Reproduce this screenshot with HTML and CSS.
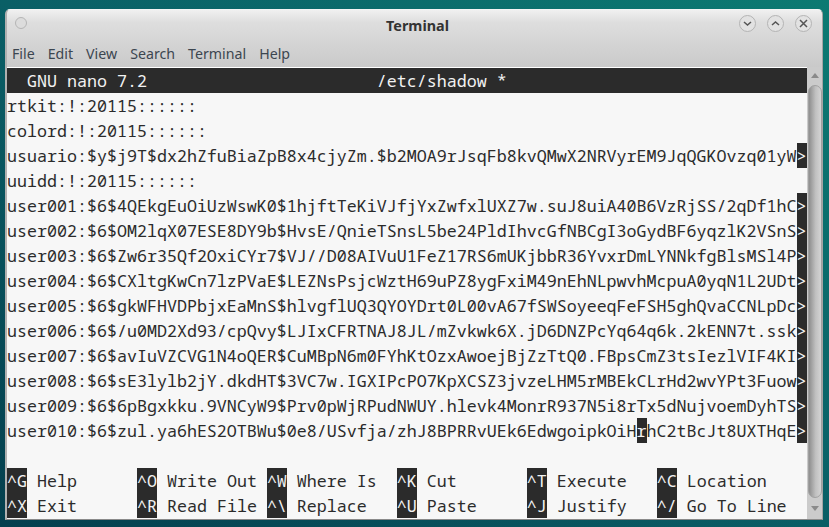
FILE: index.html
```html
<!DOCTYPE html>
<html lang="en">
<head>
<meta charset="utf-8">
<title>Terminal</title>
<link rel="stylesheet" href="styles.css">
</head>
<body>
<div class="window">
  <header class="titlebar">
    <span class="btn-left"></span>
    <span class="title">Terminal</span>
    <div class="controls">
      <span class="btn"><svg width="15" height="15" viewBox="0 0 15 15"><path d="M4 6l3.500 3L11 6" fill="none" stroke="#555" stroke-width="1.500"/></svg></span>
      <span class="btn"><svg width="15" height="15" viewBox="0 0 15 15"><path d="M4 9l3.500-3L11 9" fill="none" stroke="#555" stroke-width="1.500"/></svg></span>
      <span class="btn"><svg width="15" height="15" viewBox="0 0 15 15"><path d="M4 4l7 7m0-7l-7 7" fill="none" stroke="#555" stroke-width="1.500"/></svg></span>
    </div>
  </header>
  <nav class="menu">
    <span>File</span><span>Edit</span><span>View</span><span>Search</span><span>Terminal</span><span>Help</span>
  </nav>
  <div class="body">
    <main class="term">
<div class="row status">  GNU nano 7.2                       /etc/shadow *</div>
<div class="row">rtkit:!:20115::::::</div>
<div class="row">colord:!:20115::::::</div>
<div class="row">usuario:$y$j9T$dx2hZfuBiaZpB8x4cjyZm.$b2MOA9rJsqFb8kvQMwX2NRVyrEM9JqQGKOvzq01yW<span class="k">&gt;</span></div>
<div class="row">uuidd:!:20115::::::</div>
<div class="row">user001:$6$4QEkgEuOiUzWswK0$1hjftTeKiVJfjYxZwfxlUXZ7w.suJ8uiA40B6VzRjSS/2qDf1hC<span class="k">&gt;</span></div>
<div class="row">user002:$6$OM2lqX07ESE8DY9b$HvsE/QnieTSnsL5be24PldIhvcGfNBCgI3oGydBF6yqzlK2VSnS<span class="k">&gt;</span></div>
<div class="row">user003:$6$Zw6r35Qf2OxiCYr7$VJ//D08AIVuU1FeZ17RS6mUKjbbR36YvxrDmLYNNkfgBlsMSl4P<span class="k">&gt;</span></div>
<div class="row">user004:$6$CXltgKwCn7lzPVaE$LEZNsPsjcWztH69uPZ8ygFxiM49nEhNLpwvhMcpuA0yqN1L2UDt<span class="k">&gt;</span></div>
<div class="row">user005:$6$gkWFHVDPbjxEaMnS$hlvgflUQ3QYOYDrt0L00vA67fSWSoyeeqFeFSH5ghQvaCCNLpDc<span class="k">&gt;</span></div>
<div class="row">user006:$6$/u0MD2Xd93/cpQvy$LJIxCFRTNAJ8JL/mZvkwk6X.jD6DNZPcYq64q6k.2kENN7t.ssk<span class="k">&gt;</span></div>
<div class="row">user007:$6$avIuVZCVG1N4oQER$CuMBpN6m0FYhKtOzxAwoejBjZzTtQ0.FBpsCmZ3tsIezlVIF4KI<span class="k">&gt;</span></div>
<div class="row">user008:$6$sE3lylb2jY.dkdHT$3VC7w.IGXIPcPO7KpXCSZ3jvzeLHM5rMBEkCLrHd2wvYPt3Fuow<span class="k">&gt;</span></div>
<div class="row">user009:$6$6pBgxkku.9VNCyW9$Prv0pWjRPudNWUY.hlevk4MonrR937N5i8rTx5dNujvoemDyhTS<span class="k">&gt;</span></div>
<div class="row">user010:$6$zul.ya6hES2OTBWu$0e8/USvfja/zhJ8BPRRvUEk6EdwgoipkOiH<span class="k">r</span>hC2tBcJt8UXTHqE<span class="k">&gt;</span></div>
<div class="row"> </div>
<div class="row"><span class="k">^G</span> Help      <span class="k">^O</span> Write Out <span class="k">^W</span> Where Is  <span class="k">^K</span> Cut       <span class="k">^T</span> Execute   <span class="k">^C</span> Location</div>
<div class="row"><span class="k">^X</span> Exit      <span class="k">^R</span> Read File <span class="k">^\</span> Replace   <span class="k">^U</span> Paste     <span class="k">^J</span> Justify   <span class="k">^/</span> Go To Line</div>
    </main>
    <aside class="scrollbar">
      <span class="arrow up"></span>
      <span class="thumb"></span>
      <span class="arrow down"></span>
    </aside>
  </div>
</div>
</body>
</html>
```
FILE: styles.css
```css
* { box-sizing: border-box; }
html, body { margin: 0; height: 100%; }
body {
  width: 829px;
  height: 527px;
  overflow: hidden;
  padding: 9px 6px 7px 5px;
  background: linear-gradient(to top right, #043f4e 0%, #0a5f66 50%, #0c7a72 100%);
  display: flex;
}
.window {
  width: 818px;
  height: 511px;
  display: flex;
  flex-direction: column;
  border-radius: 5px 5px 0 0;
  background: linear-gradient(#f0f0f0 0, #dedede 12px, #c9c9c9 58px);
  border-top: 1px solid #f4f4f4;
  border-left: 2px solid #b0b0b0;
  border-right: 1px solid #a4a4a4;
  border-bottom: 1px solid #8a8a8a;
  font-family: "Noto Sans", sans-serif;
}
.titlebar {
  height: 32px;
  flex: none;
  display: flex;
  align-items: center;
  justify-content: space-between;
  padding: 0 10px 6px 8px;
  position: relative;
}
.btn-left {
  width: 12px;
  height: 12px;
  border-radius: 50%;
  background: #dcdcdc;
  border: 1px solid #b5b5b5;
}
.title {
  position: absolute;
  left: 6px;
  right: 0;
  top: 6px;
  text-align: center;
  font-size: 14.4px;
  font-weight: 700;
  color: #333;
}
.controls { display: flex; gap: 11px; }
.btn {
  width: 17px;
  height: 17px;
  border-radius: 50%;
  border: 1px solid #b4b4b4;
  background: #e2e2e2;
  display: flex;
  align-items: center;
  justify-content: center;
}
.menu {
  height: 25px;
  flex: none;
  display: flex;
  gap: 13px;
  padding: 0 0 3px 5px;
  align-items: center;
  font-size: 14.2px;
  color: #3c4650;
}
.body { flex: 1; display: flex; min-height: 0; }
.term {
  width: 800px;
  flex: none;
  padding-top: 1px;
  background: #f7f7f7;
  box-shadow: inset 0 1px 0 #fff;
  font-family: "Noto Sans Mono", "Liberation Mono", monospace;
  font-size: 16.667px;
  color: #2b2b2b;
}
.row {
  height: 25px;
  line-height: 25px;
  white-space: pre;
}
.status {
  background: #2b2b2b;
  color: #f2f2f2;
}
.k {
  display: inline-block;
  background: #2b2b2b;
  color: #f2f2f2;
}
.scrollbar {
  flex: 1;
  display: flex;
  flex-direction: column;
  align-items: center;
  padding-top: 6px;
  background: #cbcbcb;
}
.arrow { width: 0; height: 0; border: 4px solid transparent; flex: none; }
.up { border-bottom: 5px solid #8a8a8a; border-top-width: 0; }
.down { border-top: 5px solid #8a8a8a; border-bottom-width: 0; margin-top: 8px; }
.thumb {
  width: 14px;
  height: 413px;
  margin-top: 7px;
  flex: none;
  border-radius: 7px;
  background: linear-gradient(90deg, #8e8e8e, #c0c0c0 55%, #d4d4d4);
  border: 1px solid #a0a0a0;
}
```
